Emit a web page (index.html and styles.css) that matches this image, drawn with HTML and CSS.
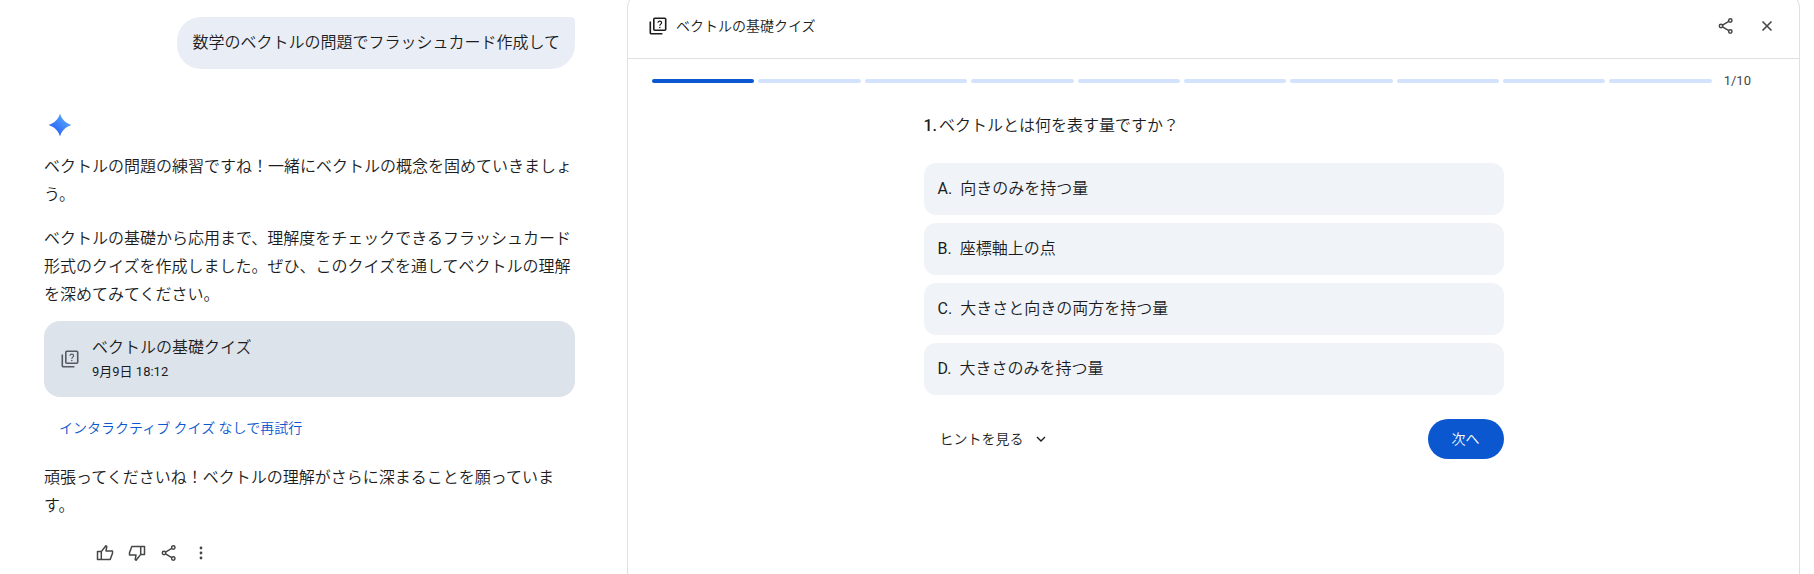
FILE: index.html
```html
<!DOCTYPE html>
<html lang="ja">
<head>
<meta charset="utf-8">
<meta name="viewport" content="width=device-width, initial-scale=1">
<title>ベクトルの基礎クイズ</title>
<link rel="stylesheet" href="styles.css">
</head>
<body>
<svg class="sprite" aria-hidden="true">
  <symbol id="quiz" viewBox="0 0 18 18">
    <g fill="none" stroke="currentColor" stroke-width="1.6">
      <rect x="4.8" y="1.3" width="11.9" height="11.9" rx="1"/>
      <path d="M1.3 4.6V15.7a1 1 0 0 0 1 1H13.4"/>
      <path stroke-width="1.2" d="M8.9 5.7C9 4.6 9.8 4.1 10.8 4.1s1.8.6 1.8 1.6c0 1.300-1.800 1.500-1.800 3"/>
    </g>
    <circle cx="10.8" cy="10.500" r=".8" fill="currentColor"/>
  </symbol>
  <symbol id="share" viewBox="0 0 18 18">
    <g fill="none" stroke="currentColor" stroke-width="1.5">
      <circle cx="4" cy="9" r="1.700"/>
      <circle cx="13.300" cy="3.500" r="1.700"/>
      <circle cx="13.300" cy="14.500" r="1.700"/>
      <path d="M5.500 8.100 11.800 4.400M5.500 9.900 11.800 13.600"/>
    </g>
  </symbol>
  <symbol id="thumb" viewBox="0 0 18 18">
    <path fill="none" stroke="currentColor" stroke-width="1.500" stroke-linejoin="round" d="M5.300 7.600 9.900 1.700 10.800 2.500 10 6.900H16.500V9.200L14.200 15.600H1.500V7.600H5.300V15.600"/>
  </symbol>
</svg>

<div class="app">
  <main class="chat">
    <div class="prompt">数学のベクトルの問題でフラッシュカード作成して</div>

    <article class="reply">
      <svg class="spark" viewBox="0 0 24 24" aria-hidden="true">
        <defs>
          <linearGradient id="spark-fill" x1="0" y1="1" x2="1" y2="0">
            <stop offset=".2" stop-color="#2b62f5"/>
            <stop offset=".8" stop-color="#55a5ff"/>
          </linearGradient>
        </defs>
        <path fill="url(#spark-fill)" d="M12 .5C13.500 6 18 10.500 23.500 12 18 13.500 13.500 18 12 23.500 10.500 18 6 13.500.5 12 6 10.500 10.500 6 12 .5Z"/>
      </svg>
      <p class="text">ベクトルの問題の練習ですね！一緒にベクトルの概念を固めていきましょう。</p>
      <p class="text">ベクトルの基礎から応用まで、理解度をチェックできるフラッシュカード形式のクイズを作成しました。ぜひ、このクイズを通してベクトルの理解を深めてみてください。</p>

      <button class="quiz-card" type="button">
        <svg class="icon" aria-hidden="true"><use href="#quiz"/></svg>
        <span class="quiz-card-body">
          <span class="quiz-card-title">ベクトルの基礎クイズ</span>
          <span class="quiz-card-date">9月9日 18:12</span>
        </span>
      </button>

      <a class="retry" href="#">インタラクティブ クイズ なしで再試行</a>

      <p class="text">頑張ってくださいね！ベクトルの理解がさらに深まることを願っています。</p>

      <div class="actions">
        <button class="icon-button" type="button" aria-label="良い回答"><svg class="icon" aria-hidden="true"><use href="#thumb"/></svg></button>
        <button class="icon-button" type="button" aria-label="悪い回答"><svg class="icon flipped" aria-hidden="true"><use href="#thumb"/></svg></button>
        <button class="icon-button" type="button" aria-label="共有"><svg class="icon" aria-hidden="true"><use href="#share"/></svg></button>
        <button class="icon-button" type="button" aria-label="その他"><svg class="icon" viewBox="0 0 18 18" fill="currentColor" aria-hidden="true"><circle cx="9" cy="4" r="1.400"/><circle cx="9" cy="9" r="1.400"/><circle cx="9" cy="14" r="1.400"/></svg></button>
      </div>
    </article>
  </main>

  <section class="panel" aria-labelledby="panel-title">
    <header class="panel-header">
      <svg class="icon" aria-hidden="true"><use href="#quiz"/></svg>
      <h1 class="panel-title" id="panel-title">ベクトルの基礎クイズ</h1>
      <button class="icon-button" type="button" aria-label="共有"><svg class="icon" aria-hidden="true"><use href="#share"/></svg></button>
      <button class="icon-button" type="button" aria-label="閉じる"><svg class="icon" viewBox="0 0 18 18" aria-hidden="true"><path fill="none" stroke="currentColor" stroke-width="1.600" d="M4.500 4.500 13.500 13.500M13.500 4.500 4.500 13.500"/></svg></button>
    </header>

    <div class="progress">
      <div class="segments" role="progressbar" aria-label="進捗" aria-valuemin="0" aria-valuemax="10" aria-valuenow="1">
        <span class="segment done"></span>
        <span class="segment"></span>
        <span class="segment"></span>
        <span class="segment"></span>
        <span class="segment"></span>
        <span class="segment"></span>
        <span class="segment"></span>
        <span class="segment"></span>
        <span class="segment"></span>
        <span class="segment"></span>
      </div>
      <span class="count">1/10</span>
    </div>

    <div class="question">
      <h2 class="question-title"><b class="number">1.</b><span>ベクトルとは何を表す量ですか？</span></h2>
      <div class="options">
        <button class="option" type="button"><span class="letter">A.</span><span>向きのみを持つ量</span></button>
        <button class="option" type="button"><span class="letter">B.</span><span>座標軸上の点</span></button>
        <button class="option" type="button"><span class="letter">C.</span><span>大きさと向きの両方を持つ量</span></button>
        <button class="option" type="button"><span class="letter">D.</span><span>大きさのみを持つ量</span></button>
      </div>
      <div class="controls">
        <button class="hint" type="button">ヒントを見る
          <svg class="icon" viewBox="0 0 18 18" aria-hidden="true"><path fill="none" stroke="currentColor" stroke-width="1.400" d="M5 7 9 11 13 7"/></svg>
        </button>
        <button class="next" type="button">次へ</button>
      </div>
    </div>
  </section>
</div>
</body>
</html>
```
FILE: styles.css
```css
* {
  box-sizing: border-box;
}

body {
  margin: 0;
  overflow: hidden;
  background: #fff;
  color: #1b1c1d;
  font-family: Roboto, "Noto Sans CJK JP", sans-serif;
  font-size: 16px;
  font-weight: 350;
  line-height: 28px;
}

button {
  margin: 0;
  padding: 0;
  border: 0;
  background: none;
  color: inherit;
  font: inherit;
  text-align: left;
  cursor: pointer;
}

.sprite {
  position: absolute;
  width: 0;
  height: 0;
}

.icon {
  display: block;
  flex: none;
  width: 18px;
  height: 18px;
}

.icon.flipped {
  transform: rotate(180deg);
}

.icon-button {
  display: grid;
  place-items: center;
  width: 32px;
  height: 32px;
  color: #444746;
}

.app {
  display: grid;
  grid-template-columns: 627fr 1173fr;
  min-height: 100vh;
  padding-right: 14px;
}

/* Conversation */
.chat {
  display: flex;
  flex-direction: column;
  padding: 17px 52px 0 44px;
}

.prompt {
  align-self: flex-end;
  padding: 12px 15px;
  border-radius: 24px 4px 24px 24px;
  background: #e9eef6;
}

.reply {
  display: flex;
  flex-direction: column;
  margin-top: 44px;
}

.spark {
  width: 24px;
  height: 24px;
  margin: 0 0 16px 4px;
}

.text {
  margin: 0 0 16px;
}

.quiz-card {
  display: flex;
  align-items: center;
  gap: 13px;
  margin-top: -4px;
  padding: 14px 17px;
  border-radius: 16px;
  background: #dde3ea;
}

.quiz-card .icon {
  color: #575b5f;
}

.quiz-card-body {
  display: flex;
  flex-direction: column;
}

.quiz-card-title {
  line-height: 26px;
}

.quiz-card-date {
  font-size: 13px;
  font-weight: 400;
  line-height: 22px;
}

.retry {
  align-self: flex-start;
  margin: 17px 0 22px 15px;
  color: #0b57d0;
  font-size: 14px;
  text-decoration: none;
}

.actions {
  display: flex;
  margin: 1px 0 0 45px;
}

/* Quiz panel */
.panel {
  margin-top: -8px;
  border: 1px solid #e0e0e0;
  border-bottom: 0;
  border-radius: 16px 16px 0 0;
}

.panel-header {
  display: flex;
  align-items: center;
  gap: 9px;
  padding: 17px 16px 16px 21px;
  border-bottom: 1px solid #e0e0e0;
}

.panel-title {
  flex: 1;
  margin: 0;
  font-size: 14px;
  font-weight: 350;
}

.progress {
  display: flex;
  align-items: center;
  gap: 12px;
  padding: 12px 48px 0 24px;
  line-height: 20px;
}

.segments {
  display: flex;
  flex: 1;
  gap: 4px;
}

.segment {
  flex: 1;
  height: 4px;
  border-radius: 2px;
  background: #d3e3fd;
}

.segment.done {
  background: #0b57d0;
}

.count {
  color: #444746;
  font-size: 13px;
  font-weight: 400;
}

.question {
  max-width: 580px;
  margin: 21px auto 0;
}

.question-title {
  display: flex;
  gap: 2px;
  margin: 0 0 23px;
  font-size: 16px;
  font-weight: 350;
}

.number {
  font-weight: 500;
}

.options {
  display: flex;
  flex-direction: column;
  gap: 8px;
}

.option {
  display: flex;
  gap: 8px;
  padding: 12px 14px;
  border-radius: 12px;
  background: #f0f4f9;
}

.letter {
  font-weight: 400;
}

.controls {
  display: flex;
  align-items: center;
  justify-content: space-between;
  margin-top: 24px;
  font-size: 14px;
  line-height: 20px;
}

.hint {
  display: flex;
  align-items: center;
  gap: 8px;
  padding: 10px 16px;
}

.next {
  padding: 10px 24px;
  border-radius: 20px;
  background: #0b57d0;
  color: #fff;
}
```
